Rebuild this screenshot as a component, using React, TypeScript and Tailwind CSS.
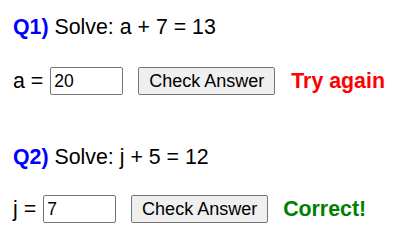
import { useState } from 'react';

type Question = {
  id: string;
  variable: string;
  addend: number;
  total: number;
  answer: string;
  result: 'wrong' | 'right';
};

const questions: Question[] = [
  { id: 'Q1)', variable: 'a', addend: 7, total: 13, answer: '20', result: 'wrong' },
  { id: 'Q2)', variable: 'j', addend: 5, total: 12, answer: '7', result: 'right' },
];

function QuestionBlock({ q, rowGap }: { q: Question; rowGap: string }) {
  const [value, setValue] = useState(q.answer);

  return (
    <div>
      <p className="h-[24px] text-[21.33px] leading-[24px]">
        <span className="font-bold text-[#0000ff]">{q.id}</span> Solve: {q.variable} + {q.addend} ={' '}
        {q.total}
      </p>
      <div className={`${rowGap} flex h-[28px] items-center`}>
        <span className="text-[21.33px] leading-[24px]">{q.variable} =</span>
        <input
          value={value}
          onChange={(e) => setValue(e.target.value)}
          className="ml-[7px] h-[28px] w-[73px] rounded-[2px] border border-[#767676] px-[3px] text-[17.5px] outline-none"
        />
        <button className="ml-[15px] h-[28px] w-[137px] rounded-[2px] border border-[#767676] bg-[#efefef] text-[18px] leading-none">
          Check Answer
        </button>
        {q.result === 'wrong' ? (
          <span className="ml-[16px] text-[21.33px] font-bold leading-[24px] text-[#ff0000]">Try again</span>
        ) : (
          <span className="ml-[15px] text-[21.33px] font-bold leading-[24px] text-[#008000]">Correct!</span>
        )}
      </div>
    </div>
  );
}

export default function App() {
  return (
    <div className="min-h-screen bg-white pl-[13px] pt-[15px] text-black font-['Liberation_Sans',Arial,sans-serif]">
      <QuestionBlock q={questions[0]} rowGap="mt-[28px]" />
      <div className="mt-[50px]">
        <QuestionBlock q={questions[1]} rowGap="mt-[26px]" />
      </div>
    </div>
  );
}
